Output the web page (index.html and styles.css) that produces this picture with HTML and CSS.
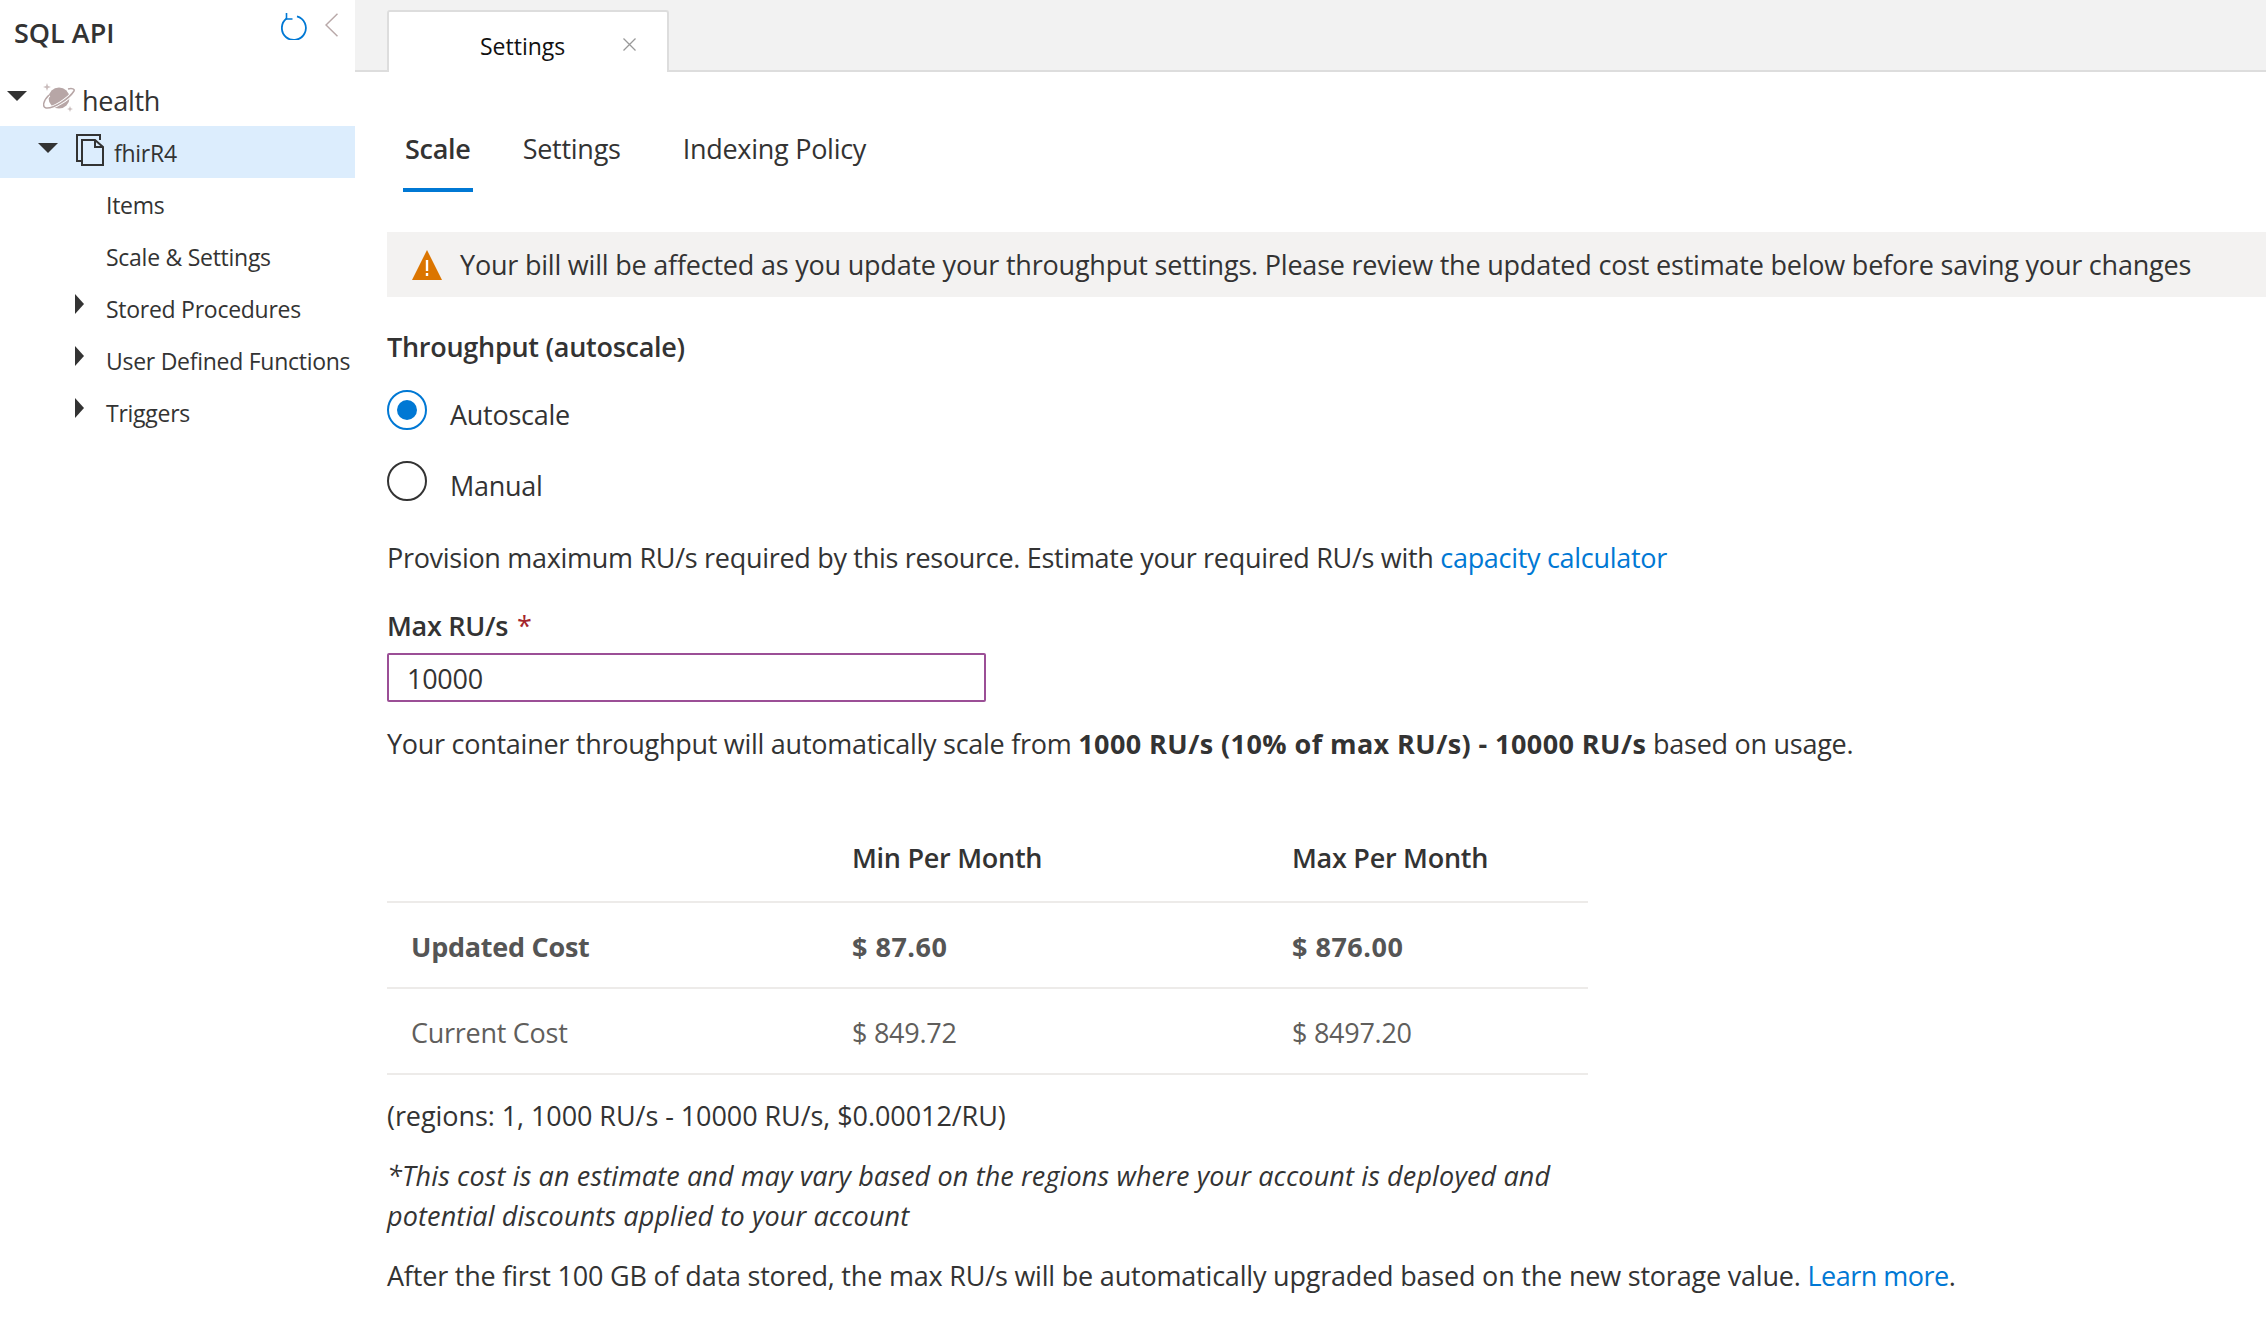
FILE: index.html
```html
<!DOCTYPE html>
<html lang="en">

<head>
    <meta charset="UTF-8">
    <title>Settings</title>
    <link rel="stylesheet" href="styles.css">
</head>

<body>
    <div class="app">
        <aside class="sidebar">
            <div class="side-head">
                <span class="side-title">SQL API</span>
                <div class="side-tools">
                    <svg width="26" height="27" viewBox="0 0 26 27">
                        <path d="M5.500 5.500 A12 12 0 1 0 16 3.400" fill="none" stroke="#0078d4" stroke-width="1.800" />
                        <path d="M5.500 0 V6 H11.500" fill="none" stroke="#0078d4" stroke-width="1.600" />
                    </svg>
                    <svg class="collapse" width="13" height="24" viewBox="0 0 13 24">
                        <path d="M12.500 .7 L1 12 L12.500 23.300" fill="none" stroke="#b9a9a9" stroke-width="1.500" />
                    </svg>
                </div>
            </div>
            <div class="tree-row db-row">
                <span class="caret-down"></span>
                <svg class="planet" width="32" height="29" viewBox="0 0 32 29">
                    <circle cx="16" cy="15" r="10.500" fill="#b7a6a6" />
                    <path d="M6 12 C0 18 -1 24 3 25 C10 26 26 16 31 8 C32 6 29 5 25 6" fill="none" stroke="#fff" stroke-width="3.500" />
                    <path d="M6 12 C0 18 -1 24 3 25 C10 26 26 16 31 8 C32 6 29 5 25 6" fill="none" stroke="#b7a6a6" stroke-width="1.500" />
                    <path d="M4 0 l1 3 3 1 -3 1 -1 3 -1 -3 -3 -1 3 -1z" fill="#c9bcbc" />
                    <path d="M27 23 l.8 2.200 2.200 .8 -2.200 .8 -.8 2.200 -.8 -2.200 -2.200 -.8 2.200 -.8z" fill="#c9bcbc" />
                </svg>
                <span class="db-name">health</span>
            </div>
            <div class="tree-row coll-row">
                <span class="caret-down"></span>
                <svg class="docs" width="28" height="32" viewBox="0 0 28 32">
                    <path d="M6 27 H1 V1 H24 V6" fill="none" stroke="#333" stroke-width="2" />
                    <path d="M6 6 H19 L27 13 V31 H6 Z M19 6 V13 H27" fill="none" stroke="#333" stroke-width="2" />
                </svg>
                <span class="coll-name">fhirR4</span>
            </div>
            <div class="tree-item">Items</div>
            <div class="tree-item">Scale &amp; Settings</div>
            <div class="tree-item"><span class="caret-right"></span>Stored Procedures</div>
            <div class="tree-item"><span class="caret-right"></span>User Defined Functions</div>
            <div class="tree-item"><span class="caret-right"></span>Triggers</div>
        </aside>

        <main class="content">
            <div class="tabbar">
                <div class="tab">
                    <span>Settings</span>
                    <svg class="tab-close" width="13" height="13" viewBox="0 0 13 13">
                        <path d="M.5 .5 L12.500 12.500 M12.500 .5 L.5 12.500" stroke="#999" stroke-width="1.300" />
                    </svg>
                </div>
            </div>

            <div class="pane">
                <nav class="pivot">
                    <a class="pivot-item active">Scale</a>
                    <a class="pivot-item">Settings</a>
                    <a class="pivot-item indexing">Indexing Policy</a>
                </nav>

                <div class="banner">
                    <svg width="30" height="30" viewBox="0 0 30 30">
                        <path d="M15 0 L30 30 H0 Z" fill="#db7500" />
                        <rect x="13.800" y="10" width="2.400" height="11" fill="#fff" />
                        <rect x="13.800" y="23" width="2.400" height="3" fill="#fff" />
                    </svg>
                    <span>Your bill will be affected as you update your throughput settings. Please review the updated cost estimate below before saving your changes</span>
                </div>

                <div class="field-title">Throughput (autoscale)</div>

                <div class="choice">
                    <span class="radio checked"><span class="radio-dot"></span></span>
                    <span class="choice-label">Autoscale</span>
                </div>
                <div class="choice manual">
                    <span class="radio"></span>
                    <span class="choice-label">Manual</span>
                </div>

                <p class="line provision">Provision maximum RU/s required by this resource. Estimate your required RU/s with <a class="link">capacity calculator</a></p>

                <div class="field-title max-label">Max RU/s <span class="req">*</span></div>
                <input class="max-input" type="text" value="10000">

                <p class="line scale-note">Your container throughput will automatically scale from <b>1000 RU/s (10% of max RU/s) - 10000 RU/s</b> based on usage.</p>

                <table class="cost">
                    <thead>
                        <tr>
                            <th class="col-name"></th>
                            <th class="col-min">Min Per Month</th>
                            <th>Max Per Month</th>
                        </tr>
                    </thead>
                    <tbody>
                        <tr class="updated">
                            <td>Updated Cost</td>
                            <td>$ 87.60</td>
                            <td>$ 876.00</td>
                        </tr>
                        <tr>
                            <td>Current Cost</td>
                            <td>$ 849.72</td>
                            <td>$ 8497.20</td>
                        </tr>
                    </tbody>
                </table>

                <p class="line regions">(regions: 1, 1000 RU/s - 10000 RU/s, $0.00012/RU)</p>
                <p class="line estimate">*This cost is an estimate and may vary based on the regions where your account is deployed and<br>potential discounts applied to your account</p>
                <p class="line upgrade">After the first 100 GB of data stored, the max RU/s will be automatically upgraded based on the new storage value. <a class="link">Learn more</a>.</p>
            </div>
        </main>
    </div>
</body>

</html>
```

FILE: styles.css
```css
html,
body {
    margin: 0;
    padding: 0;
    background-color: #FFFFFF;
}

.app {
    display: flex;
    height: 1341px;
    overflow: hidden;
    font-family: "Open Sans", "Noto Sans", sans-serif;
    font-size: 27px;
    line-height: 40px;
    letter-spacing: -0.27px;
    color: #333333;
}

/* tree on the left */
.sidebar {
    width: 355px;
    flex-shrink: 0;
    font-size: 23px;
}

.side-head {
    display: flex;
    justify-content: space-between;
    box-sizing: border-box;
    height: 76px;
    padding: 13px 17px 0 14px;
}

.side-title {
    font-size: 27px;
    font-weight: 600;
    letter-spacing: 0;
}

.side-tools {
    display: flex;
    gap: 18px;
    align-items: flex-start;
}

.tree-row {
    display: flex;
    align-items: center;
}

.db-row {
    height: 50px;
    padding-left: 7px;
}

.db-row .caret-down {
    margin-bottom: 11px;
}

.planet {
    margin: 0 7px 7px 16px;
}

.db-name {
    font-size: 27px;
}

.coll-row {
    height: 52px;
    margin-bottom: 2px;
    padding-left: 38px;
    background-color: #DCEDFD;
}

.coll-row .caret-down {
    margin-bottom: 8px;
}

.docs {
    margin: 0 10px 4px 18px;
}

.coll-name {
    padding-top: 2px;
}

.caret-down {
    width: 0;
    height: 0;
    border-left: 10px solid transparent;
    border-right: 10px solid transparent;
    border-top: 10px solid #333333;
}

.caret-right {
    width: 0;
    height: 0;
    margin: 0 22px 10px -31px;
    border-top: 10px solid transparent;
    border-bottom: 10px solid transparent;
    border-left: 9px solid #333333;
}

.tree-item {
    display: flex;
    align-items: center;
    box-sizing: border-box;
    height: 52px;
    padding: 0 0 2px 106px;
}

/* main area */
.content {
    flex: 1;
    min-width: 0;
}

.tabbar {
    box-sizing: border-box;
    height: 72px;
    padding: 10px 0 0 32px;
    background-color: #F2F2F2;
    border-bottom: 2px solid #DDDDDD;
}

.tab {
    display: flex;
    align-items: center;
    box-sizing: border-box;
    width: 282px;
    height: 62px;
    padding: 8px 31px 0 91px;
    background-color: #FFFFFF;
    border: 2px solid #DDDDDD;
    border-bottom: none;
    border-radius: 3px 3px 0 0;
    font-size: 23px;
    letter-spacing: 0;
    color: #111111;
}

.tab-close {
    margin: 0 0 4px auto;
}

.pane {
    padding-left: 32px;
}

.pivot {
    display: flex;
    align-items: flex-end;
    gap: 48px;
    height: 120px;
    margin-bottom: 40px;
    padding-left: 16px;
}

.pivot-item {
    height: 40px;
    padding: 0 2px 23px;
}

.pivot-item.active {
    padding-bottom: 19px;
    font-weight: 600;
    border-bottom: 4px solid #0078D4;
}

.pivot-item.indexing {
    margin-left: 10px;
}

.banner {
    display: flex;
    align-items: center;
    gap: 18px;
    height: 65px;
    padding-left: 25px;
    background-color: #F3F2F1;
    letter-spacing: -0.21px;
}

.field-title {
    margin-top: 30px;
    font-weight: 600;
}

.choice {
    display: flex;
    align-items: center;
    gap: 23px;
    height: 40px;
    margin-top: 23px;
}

.choice.manual {
    margin-top: 31px;
}

.choice-label {
    padding-top: 9px;
}

.radio {
    display: flex;
    align-items: center;
    justify-content: center;
    box-sizing: border-box;
    width: 40px;
    height: 40px;
    border: 2px solid #333333;
    border-radius: 50%;
}

.radio.checked {
    border-color: #0078D4;
}

.radio-dot {
    width: 20px;
    height: 20px;
    border-radius: 50%;
    background-color: #0078D4;
}

.line {
    margin: 20px 0 0;
}

.link {
    color: #0078D4;
}

.provision {
    margin-top: 37px;
    letter-spacing: -0.3px;
}

.max-label {
    margin-top: 28px;
}

.req {
    margin-left: 2px;
    font-weight: 400;
    color: #A4262C;
}

.max-input {
    display: block;
    box-sizing: border-box;
    width: 599px;
    height: 49px;
    margin-top: 7px;
    padding: 2px 0 0 18px;
    font: inherit;
    letter-spacing: inherit;
    color: #333333;
    border: 2px solid #9B4F96;
    border-radius: 2px;
    outline: none;
}

.scale-note {
    margin-top: 22px;
}

.scale-note b {
    letter-spacing: 0.42px;
}

.cost {
    width: 1201px;
    margin-top: 50px;
    table-layout: fixed;
    border-collapse: collapse;
}

.cost th,
.cost td {
    padding: 0;
    text-align: left;
    font-weight: 400;
    border-bottom: 2px solid #EDEBE9;
}

.cost th {
    height: 87px;
    font-weight: 600;
    color: #333333;
}

.cost td {
    height: 81px;
    padding-top: 3px;
    color: #605E5C;
}

.cost .updated td {
    font-weight: 700;
    color: #555555;
}

.cost .updated td + td {
    letter-spacing: 0.5px;
}

.cost tr > :first-child {
    padding-left: 24px;
}

.col-name {
    width: 441px;
}

.col-min {
    width: 440px;
}

.regions {
    margin-top: 21px;
    letter-spacing: -0.07px;
}

.estimate {
    font-style: italic;
    letter-spacing: 0.13px;
}

.upgrade {
    letter-spacing: -0.2px;
}

.upgrade .link {
    letter-spacing: -0.5px;
}
```
